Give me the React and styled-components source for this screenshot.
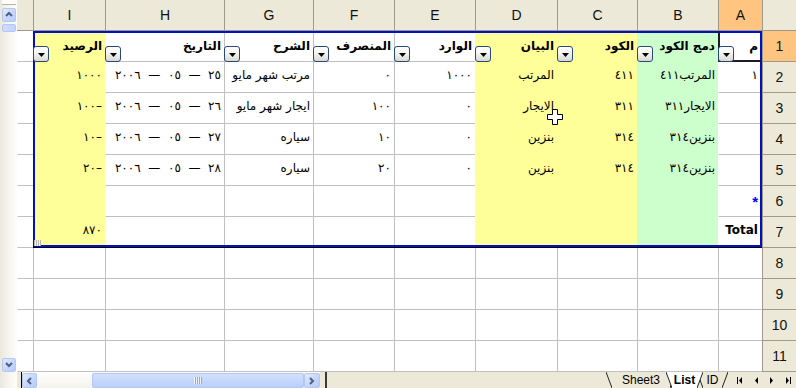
import React from 'react';
import styled, { createGlobalStyle } from 'styled-components';

const GRID = '#C0C0C0';
const HEAD_BG = '#ECE9D8';
const HEAD_LINE = '#9D9A8C';
const SEL_HEAD = '#FFC580';
const FRAME = '#0010C8';
const YELLOW = '#FFFF99';
const GREEN = '#CCFFCC';
const ARROW = '#4D6185';

const COLS = [
  { key: 'A', w: 44 },
  { key: 'B', w: 81, fill: GREEN },
  { key: 'C', w: 80, fill: YELLOW },
  { key: 'D', w: 82, fill: YELLOW },
  { key: 'E', w: 81 },
  { key: 'F', w: 81 },
  { key: 'G', w: 89 },
  { key: 'H', w: 119 },
  { key: 'I', w: 72, fill: YELLOW },
  { key: 'J', w: 16, label: '' },
];

const HEADERS = {
  A: 'م', B: 'دمج الكود', C: 'الكود', D: 'البيان', E: 'الوارد',
  F: 'المنصرف', G: 'الشرح', H: 'التاريخ', I: 'الرصيد',
};

const GlobalStyle = createGlobalStyle`
  html, body { margin: 0; padding: 0; }
  body {
    width: 796px; height: 388px; overflow: hidden; background: #fff;
    font-family: "DejaVu Sans", "Liberation Sans", sans-serif;
  }
`;

const Window = styled.div`
  position: relative;
  display: flex;
  width: 796px;
  height: 388px;
  overflow: hidden;
`;

/* ---------- vertical scrollbar ---------- */
const VScroll = styled.div`
  width: 17px;
  flex: none;
  display: flex;
  flex-direction: column;
  align-items: flex-end;
  box-sizing: border-box;
  padding-right: 1px;
  background: linear-gradient(to right, #EAE8DD, #F6F5F0 55%, #FDFDFB);
`;

const SplitStub = styled.div`
  width: 14px;
  height: 4px;
  background: #FBFBF9;
  border-bottom: 1px solid #B8B5A6;
`;

const ScrollBtn = styled.div`
  flex: none;
  box-sizing: border-box;
  width: ${p => p.$w}px;
  height: ${p => p.$h}px;
  margin-top: ${p => p.$mt || 0}px;
  margin-bottom: ${p => p.$mb || 0}px;
  border: 1px solid #B3C6F4;
  border-radius: 2px;
  background: linear-gradient(135deg, #E3ECFE, #C6D6FC 55%, #B8CCF9);
  display: flex;
  align-items: center;
  justify-content: center;
`;

const VThumb = styled.div`
  width: 14px;
  height: 8px;
  margin-top: 2px;
  box-sizing: border-box;
  border: 1px solid #B3C6F4;
  border-radius: 2px;
  background: linear-gradient(to right, #CFDCFC, #C2D3FB);
`;

const Spacer = styled.div`
  flex: 1;
`;

/* ---------- sheet ---------- */
const Main = styled.div`
  flex: 1;
  display: flex;
  flex-direction: column;
  min-width: 0;
`;

const Sheet = styled.div`
  display: grid;
  direction: rtl;
  grid-template-columns: 34px ${COLS.map(c => c.w + 'px').join(' ')};
  grid-template-rows: repeat(12, 31px);
  height: 372px;
`;

const Corner = styled.div`
  grid-row: 1;
  grid-column: 1;
  box-sizing: border-box;
  background: ${HEAD_BG};
  border-left: 1px solid ${HEAD_LINE};
  border-bottom: 1px solid ${HEAD_LINE};
`;

const ColHead = styled.div`
  box-sizing: border-box;
  background: ${p => (p.$sel ? SEL_HEAD : HEAD_BG)};
  border-left: ${p => (p.$edge ? 'none' : `1px solid ${HEAD_LINE}`)};
  border-bottom: 1px solid ${HEAD_LINE};
  display: flex;
  align-items: center;
  justify-content: center;
  font: 14px "Liberation Sans", Arial, sans-serif;
  color: #111;
`;

const RowHead = styled.div`
  grid-column: 1;
  box-sizing: border-box;
  background: ${p => (p.$sel ? SEL_HEAD : HEAD_BG)};
  border-left: 1px solid ${HEAD_LINE};
  border-bottom: 1px solid ${HEAD_LINE};
  display: flex;
  align-items: center;
  justify-content: center;
  font: 14px "Liberation Sans", Arial, sans-serif;
  color: #111;
`;

const Cell = styled.div`
  box-sizing: border-box;
  min-width: 0;
  background: ${p => p.$fill || '#fff'};
  border-left: 1px solid ${p => (p.$noLeft ? p.$fill || '#fff' : GRID)};
  border-bottom: 1px solid ${p => (p.$noBottom ? p.$fill || '#fff' : GRID)};
  display: flex;
  align-items: center;
  justify-content: ${p => (p.$head ? 'space-between' : 'flex-start')};
  padding: 0 ${p => p.$pr}px ${p => (p.$head ? 0 : 4)}px 0;
  font: ${p => (p.$head ? 700 : 400)} 12px "DejaVu Sans", sans-serif;
  color: #000;
  white-space: nowrap;
`;

const HeadLabel = styled.span`
  align-self: center;
`;

/* numbers are written in their visual (left-to-right) order */
const Num = styled.span`
  direction: ltr;
  unicode-bidi: bidi-override;
  white-space: pre;
`;

/* merged code: the word sits on the right, its number on the left */
const CodeText = styled.span`
  display: flex;
  direction: rtl;
  align-items: baseline;
`;

const Word = styled.span`
  direction: rtl;
  unicode-bidi: isolate;
`;

const DropButton = styled.span`
  position: relative;
  z-index: 3;
  flex: none;
  align-self: flex-end;
  width: 16px;
  height: 16px;
  margin-left: -1px;
  margin-bottom: -1px;
  box-sizing: border-box;
  border: 1px solid #28497A;
  border-radius: 3px;
  background: linear-gradient(#FFFFFF, #F4F4F1 45%, #D9D7CF);
  display: flex;
  align-items: center;
  justify-content: center;
`;

const Star = styled.span`
  color: #0000FF;
  font: 700 15px "Liberation Sans", Arial, sans-serif;
  margin-top: 4px;
`;

const TotalLabel = styled.span`
  font: 700 12px "DejaVu Sans", sans-serif;
`;

const ListFrame = styled.div`
  grid-column: 2 / 11;
  grid-row: 2 / 9;
  align-self: start;
  height: 216px;
  box-sizing: border-box;
  border: 2px solid ${FRAME};
  box-shadow: 0 1px 0 #000;
  pointer-events: none;
  z-index: 2;
`;

/* little resize grip in the list's bottom-left corner */
const ResizeGrip = styled.div`
  grid-column: 10 / 11;
  grid-row: 8 / 9;
  align-self: end;
  justify-self: end;
  width: 7px;
  height: 6px;
  margin-bottom: 2px;
  margin-left: 1px;
  z-index: 3;
  background:
    repeating-linear-gradient(to right, #B9B9B0 0 1px, #F2F2EE 1px 2px);
`;

const ActiveCell = styled.div`
  grid-column: 2 / 3;
  grid-row: 2 / 3;
  box-sizing: border-box;
  border-left: 2px solid #1C1A2C;
  border-bottom: 2px solid #1C1A2C;
  pointer-events: none;
  z-index: 2;
`;

/* ---------- bottom bar ---------- */
const BottomBar = styled.div`
  height: 16px;
  display: flex;
  background: ${HEAD_BG};
`;

const BarPad = styled.div`
  width: 4px;
  flex: none;
`;

const HScroll = styled.div`
  flex: none;
  display: flex;
  align-items: flex-end;
  border-left: 1px solid #000;
  background: linear-gradient(#FEFEFC, #F4F3EE);
`;

const HTrack = styled.div`
  width: 55px;
  flex: none;
`;

const HThumb = styled.div`
  width: 212px;
  height: 15px;
  flex: none;
  box-sizing: border-box;
  border: 1px solid #B3C6F4;
  border-radius: 2px;
  background: linear-gradient(#D3E0FD, #C4D5FC 60%, #BBCEFA);
  display: flex;
  align-items: center;
  justify-content: center;
`;

const Grip = styled.span`
  width: 8px;
  height: 7px;
  background: repeating-linear-gradient(to right, #EEF3FE 0 1px, #8DA8E4 1px 2px);
`;

const Splitter = styled.div`
  width: 2px;
  flex: none;
  margin-left: 5px;
  background: #3B3A36;
`;

const TabsArea = styled.div`
  flex: 1;
  display: flex;
  justify-content: flex-end;
  align-items: stretch;
`;

const Tab = styled.div`
  position: relative;
  z-index: ${p => (p.$active ? 2 : 1)};
  display: flex;
  margin-left: ${p => p.$ml || 0}px;
  height: 16px;
`;

const TabLabel = styled.span`
  width: ${p => p.$w}px;
  display: flex;
  align-items: center;
  justify-content: center;
  background: ${p => (p.$active ? '#fff' : HEAD_BG)};
  font: ${p => (p.$active ? 700 : 400)} 12px "Liberation Sans", Arial, sans-serif;
  color: #000;
`;

const NavGroup = styled.div`
  display: flex;
  margin-left: 3px;
  margin-right: 1px;
`;

const NavBtn = styled.span`
  width: 16px;
  height: 16px;
  display: flex;
`;

const Cursor = styled.svg`
  position: absolute;
  left: 547px;
  top: 109px;
  z-index: 5;
`;

/* ---------- icons ---------- */
const Chevron = ({ dir }) => {
  const pts = {
    up: '1,5 4,2 7,5',
    down: '1,2 4,5 7,2',
    left: '5,1 2,4 5,7',
    right: '2,1 5,4 2,7',
  }[dir];
  return (
    <svg width="8" height="8" viewBox="0 0 8 8">
      <polyline points={pts} fill="none" stroke={ARROW} strokeWidth="2" />
    </svg>
  );
};

const DropTri = () => (
  <svg width="7" height="4" viewBox="0 0 7 4" style={{ marginTop: 2 }}>
    <polygon points="0,0 7,0 3.5,4" fill="#000" />
  </svg>
);

const TabEdge = ({ side, active }) => {
  const fill = active ? '#fff' : HEAD_BG;
  return side === 'left' ? (
    <svg width="6" height="16" viewBox="0 0 6 16">
      <polygon points="0,0 6,0 6,16" fill={fill} />
      <line x1="0" y1="0" x2="6" y2="16" stroke="#222" strokeWidth="1" />
    </svg>
  ) : (
    <svg width="6" height="16" viewBox="0 0 6 16">
      <polygon points="0,0 6,0 0,16" fill={fill} />
      <line x1="6" y1="0" x2="0" y2="16" stroke="#222" strokeWidth="1" />
    </svg>
  );
};

const NavIcon = ({ kind }) => (
  <svg width="16" height="16" viewBox="0 0 16 16">
    {kind === 'first' && (
      <>
        <rect x="6" y="5" width="1" height="7" fill="#000" />
        <polygon points="11,5 8,8.5 11,12" fill="#000" />
      </>
    )}
    {kind === 'prev' && <polygon points="11,5 8,8.5 11,12" fill="#000" />}
    {kind === 'next' && <polygon points="7,5 10,8.5 7,12" fill="#000" />}
    {kind === 'last' && (
      <>
        <polygon points="7,5 10,8.5 7,12" fill="#000" />
        <rect x="11" y="5" width="1" height="7" fill="#000" />
      </>
    )}
  </svg>
);

/* ---------- data ---------- */
const code = (num, word) => (
  <CodeText>
    <Word>{word}</Word>
    <Num>{num}</Num>
  </CodeText>
);
const n = v => <Num>{v}</Num>;
const date = d => n(`٢٠٠٦  —  ٠٥  —  ${d}`);

const ROWS = [
  { A: n('١'), B: code('٤١١', 'المرتب'), C: n('٤١١'), D: 'المرتب', E: n('١٠٠٠'), F: n('٠'), G: 'مرتب شهر مايو', H: date('٢٥'), I: n('١٠٠٠') },
  { B: code('٣١١', 'الايجار'), C: n('٣١١'), D: 'الايجار', E: n('٠'), F: n('١٠٠'), G: 'ايجار شهر مايو', H: date('٢٦'), I: n('١٠٠–') },
  { B: code('٣١٤', 'بنزين'), C: n('٣١٤'), D: 'بنزين', E: n('٠'), F: n('١٠'), G: 'سياره', H: date('٢٧'), I: n('١٠–') },
  { B: code('٣١٤', 'بنزين'), C: n('٣١٤'), D: 'بنزين', E: n('٠'), F: n('٢٠'), G: 'سياره', H: date('٢٨'), I: n('٢٠–') },
  { A: <Star>*</Star> },
  { A: <TotalLabel>Total</TotalLabel>, I: n('٨٧٠') },
];

const LIST_ROWS = 7;

function cellFill(ci, r) {
  const col = COLS[ci];
  return r <= LIST_ROWS && col.fill ? col.fill : null;
}

export default function App() {
  const cells = [];
  for (let r = 1; r <= 11; r++) {
    COLS.forEach((col, ci) => {
      const fill = cellFill(ci, r);
      const leftFill = ci + 1 < COLS.length ? cellFill(ci + 1, r) : null;
      const belowFill = r < 11 ? cellFill(ci, r + 1) : null;
      const isHead = r === 1 && HEADERS[col.key];
      const content = r === 1 ? null : (ROWS[r - 2] || {})[col.key];
      cells.push(
        <Cell
          key={`${col.key}${r}`}
          style={{ gridRow: r + 1, gridColumn: ci + 2 }}
          $fill={fill}
          $noLeft={!!fill || !!leftFill || col.key === 'J'}
          $noBottom={!!fill || !!belowFill}
          $head={!!isHead}
          $pr={col.key === 'A' ? 4 : 3}
        >
          {isHead ? (
            <>
              <HeadLabel>{HEADERS[col.key]}</HeadLabel>
              <DropButton>
                <DropTri />
              </DropButton>
            </>
          ) : (
            content
          )}
        </Cell>
      );
    });
  }

  return (
    <>
      <GlobalStyle />
      <Window>
        <VScroll>
          <SplitStub />
          <ScrollBtn $w={14} $h={14} $mt={3}>
            <Chevron dir="up" />
          </ScrollBtn>
          <VThumb />
          <Spacer />
          <ScrollBtn $w={14} $h={14} $mb={16}>
            <Chevron dir="down" />
          </ScrollBtn>
        </VScroll>

        <Main>
          <Sheet>
            <Corner />
            {COLS.map(col => (
              <ColHead key={col.key} $sel={col.key === 'A'} $edge={col.key === 'J'}>
                {col.label === '' ? '' : col.key}
              </ColHead>
            ))}
            {Array.from({ length: 11 }, (_, i) => (
              <RowHead key={i} style={{ gridRow: i + 2 }} $sel={i === 0}>
                {i + 1}
              </RowHead>
            ))}
            {cells}
            <ListFrame />
            <ResizeGrip />
            <ActiveCell />
          </Sheet>

          <BottomBar>
            <BarPad />
            <HScroll>
              <ScrollBtn $w={15} $h={15}>
                <Chevron dir="left" />
              </ScrollBtn>
              <HTrack />
              <HThumb>
                <Grip />
              </HThumb>
              <ScrollBtn $w={16} $h={15}>
                <Chevron dir="right" />
              </ScrollBtn>
            </HScroll>
            <Splitter />
            <TabsArea>
              <Tab>
                <TabEdge side="left" />
                <TabLabel $w={58}>Sheet3</TabLabel>
                <TabEdge side="right" />
              </Tab>
              <Tab $active $ml={-10}>
                <TabEdge side="left" active />
                <TabLabel $w={25} $active>List</TabLabel>
                <TabEdge side="right" active />
              </Tab>
              <Tab $ml={-6}>
                <TabEdge side="left" />
                <TabLabel $w={19}>ID</TabLabel>
                <TabEdge side="right" />
              </Tab>
              <NavGroup>
                <NavBtn><NavIcon kind="first" /></NavBtn>
                <NavBtn><NavIcon kind="prev" /></NavBtn>
                <NavBtn><NavIcon kind="next" /></NavBtn>
                <NavBtn><NavIcon kind="last" /></NavBtn>
              </NavGroup>
            </TabsArea>
          </BottomBar>
        </Main>

        <Cursor width="16" height="16" viewBox="0 0 16 16">
          <path d="M5.5 0.5h5v5h5v5h-5v5h-5v-5h-5v-5h5z" fill="#fff" stroke="#000" />
        </Cursor>
      </Window>
    </>
  );
}
